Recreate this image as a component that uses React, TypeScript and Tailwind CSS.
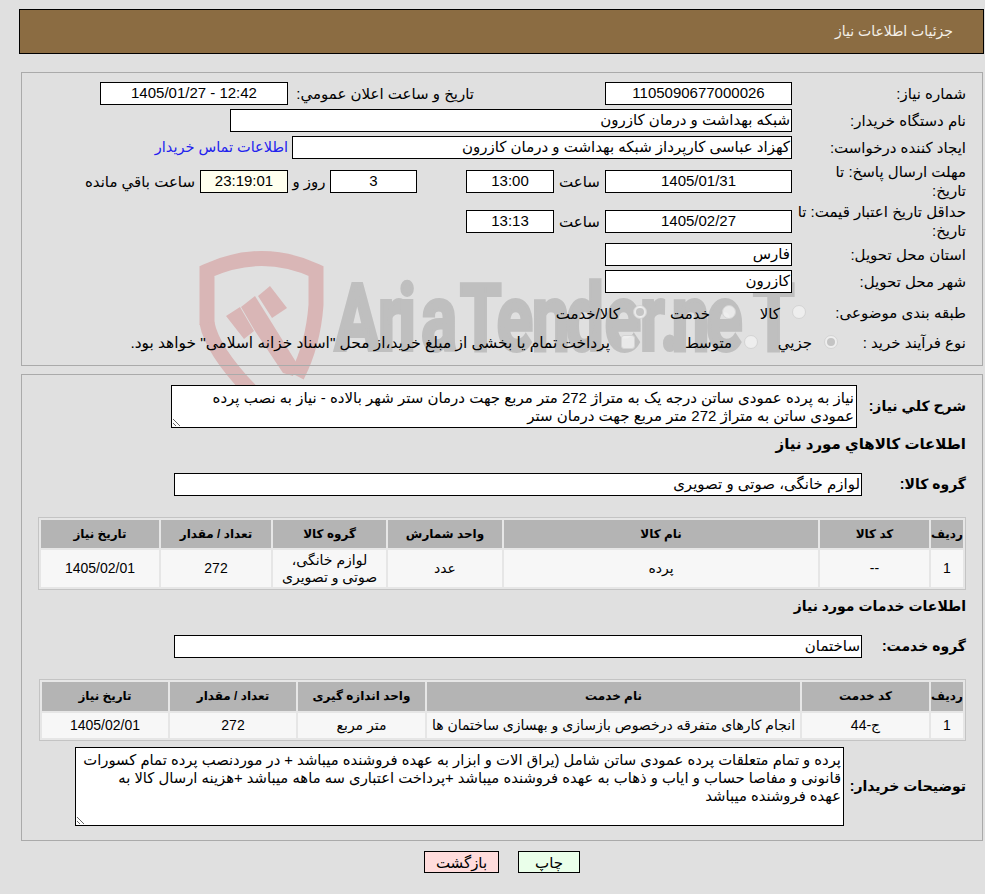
const Box = ({ w, children, center, bg }: { w: string; children?: React.ReactNode; center?: boolean; bg?: string }) => (
  <div className={`${w} ${bg ?? "bg-white"} h-[23px] shrink-0 border border-black px-px leading-[20px] whitespace-nowrap overflow-hidden ${center ? "text-center" : "text-right"}`}>
    {children}
  </div>
);

const Radio = ({ on }: { on?: boolean }) => (
  <span className="flex h-[14px] w-[14px] shrink-0 items-center justify-center rounded-full border border-[#d4d4d4] bg-[#f0f0f0]/85">
    {on && <span className="h-[8px] w-[8px] rounded-full bg-[#c4c4c4]" />}
  </span>
);

const goodsCols = ["w-[32px]", "w-[109px]", "w-[314px]", "w-[114px]", "w-[113px]", "w-[110px]", "w-[118px]"];
const serviceCols = ["w-[32px]", "w-[127px]", "w-[373px]", "w-[127px]", "w-[126px]", "w-[126px]"];

const DataTable = ({ cols, head, row, headH, rowH }: { cols: string[]; head: string[]; row: React.ReactNode[]; headH: string; rowH: string }) => (
  <table className="w-[927px] table-fixed border-separate border-spacing-[2px] border border-[#c4c4c4] bg-[#e6e6e6] text-center text-[14px]">
    <colgroup>
      {cols.map((c, i) => (
        <col key={i} className={c} />
      ))}
    </colgroup>
    <thead>
      <tr className={headH}>
        {head.map((h) => (
          <th key={h} className="whitespace-nowrap bg-[#b4b4b4] p-0 text-[12px] font-bold">{h}</th>
        ))}
      </tr>
    </thead>
    <tbody>
      <tr className={rowH}>
        {row.map((c, i) => (
          <td key={i} className="bg-[#f7f7f7] p-0 leading-[17px]">{c}</td>
        ))}
      </tr>
    </tbody>
  </table>
);

export default function App() {
  return (
    <div dir="rtl" className="relative h-[894px] overflow-hidden bg-[#e0e0e0] pt-[9px] font-['Liberation_Sans','DejaVu_Sans',sans-serif] text-[15px] leading-[19px] text-black">
      {/* watermark behind the form */}
      <svg className="absolute left-0 top-[240px] h-[160px] w-[985px] [direction:ltr]" viewBox="0 240 985 160">
        <path fill="none" stroke="#d9b6b6" strokeWidth="15" d="M207 325 L207 271 Q262 246 316 271 L316 305 Q313 345 297 376" />
        <path fill="none" stroke="#d9b6b6" strokeWidth="15" d="M207 323 Q212 350 250 390" />
        <path
          fill="#d9b6b6"
          d="M270 286 L287 308 L272 318 L258 296 Z M255 296 L270 320 L255 331 L241 307 Z M240 307 L254 331 L244 339 L226 316 Z M270 320 L296 362 L293 376 L283 373 L255 331 Z"
        />
        <text
          transform="scale(0.72 1)"
          x="465 525 553 585 639 690 739 786 840 889 917 933 981 1046"
          y="350"
          direction="ltr"
          fontFamily="Roboto, sans-serif"
          fontWeight="700"
          fontSize="93"
          fill="#bfbfbf"
          stroke="#bfbfbf"
          strokeWidth="4"
        >
          AriaTender.neT
        </text>
      </svg>

      <div className="relative">
        <div className="ml-[19px] mr-px flex h-[45px] items-center border border-black bg-[#8b6c42] pr-[30px] text-[14px] text-[#f4f0e8]">
          جزئیات اطلاعات نیاز
        </div>

        <section className="ml-[21px] mr-[2px] mt-[18px] border border-[#aaaaaa] pb-2 pr-4 pt-[9px]">
          <div className="flex h-[23px] items-center">
            <div className="w-[174px] shrink-0">شماره نیاز:</div>
            <Box w="w-[187px]" center>1105090677000026</Box>
            <div className="w-[317px] shrink-0 whitespace-nowrap pr-[131px]">تاريخ و ساعت اعلان عمومي:</div>
            <Box w="w-[188px]" center><span dir="ltr">1405/01/27 - 12:42</span></Box>
          </div>
          <div className="mt-1 flex h-[23px] items-center">
            <div className="w-[174px] shrink-0">نام دستگاه خریدار:</div>
            <Box w="w-[562px]">شبکه بهداشت و درمان کازرون</Box>
          </div>
          <div className="mt-1 flex h-[23px] items-center">
            <div className="w-[174px] shrink-0">ایجاد کننده درخواست:</div>
            <Box w="w-[500px]">کهزاد عباسی کارپرداز شبکه بهداشت و درمان کازرون</Box>
            <a className="mr-1 whitespace-nowrap text-[14.5px] text-[#2222ee]">اطلاعات تماس خریدار</a>
          </div>
          <div className="mt-[2px] flex h-[40px] items-center">
            <div className="w-[174px] shrink-0 pl-6">مهلت ارسال پاسخ: تا تاریخ:</div>
            <Box w="w-[187px]" center>1405/01/31</Box>
            <div className="w-[51px] shrink-0 text-center">ساعت</div>
            <Box w="w-[88px]" center>13:00</Box>
            <div className="w-[49px] shrink-0" />
            <Box w="w-[87px]" center>3</Box>
            <div className="w-[42px] shrink-0 text-center">روز و</div>
            <Box w="w-[88px]" center bg="bg-[#ffffee]">23:19:01</Box>
            <div className="mr-[5px] whitespace-nowrap">ساعت باقي مانده</div>
          </div>
          <div className="flex h-[40px] items-center">
            <div className="w-[174px] shrink-0">حداقل تاریخ اعتبار قیمت: تا تاریخ:</div>
            <Box w="w-[187px]" center>1405/02/27</Box>
            <div className="w-[51px] shrink-0 text-center">ساعت</div>
            <Box w="w-[88px]" center>13:13</Box>
          </div>
          <div className="mt-[2px] flex h-[23px] items-center">
            <div className="w-[174px] shrink-0">استان محل تحویل:</div>
            <Box w="w-[187px]">فارس</Box>
          </div>
          <div className="mt-1 flex h-[23px] items-center">
            <div className="w-[174px] shrink-0">شهر محل تحویل:</div>
            <Box w="w-[187px]">کازرون</Box>
          </div>
          <div className="mt-1 flex h-[30px] items-center">
            <div className="w-[160px] shrink-0 whitespace-nowrap">طبقه بندی موضوعی:</div>
            <Radio />
            <div className="mr-3 w-[44px] shrink-0 pt-[2px]">کالا</div>
            <Radio />
            <div className="mr-3 w-[63px] shrink-0 pt-[2px]">خدمت</div>
            <Radio on />
            <div className="mr-[13px] whitespace-nowrap pt-[2px]">کالا/خدمت</div>
          </div>
          <div className="flex h-[30px] items-center">
            <div className="w-[128px] shrink-0 whitespace-nowrap">نوع فرآیند خرید :</div>
            <Radio on />
            <div className="mr-3 w-[54px] shrink-0">جزيي</div>
            <Radio />
            <div className="mr-3 w-[97px] shrink-0">متوسط</div>
            <span className="h-[14px] w-[14px] shrink-0 rounded-[3px] border border-[#d4d4d4] bg-[#f0f0f0]/85" />
            <div className="mr-[11px] whitespace-nowrap text-[15.4px]">پرداخت تمام یا بخشی از مبلغ خرید،از محل "اسناد خزانه اسلامی" خواهد بود.</div>
          </div>
        </section>

        <section className="ml-[21px] mr-[2px] mt-2 border border-[#aaaaaa] pl-4 pr-4 pt-[10px] pb-[14px]">
          <div className="flex items-center">
            <div className="w-[109px] shrink-0 whitespace-nowrap text-[14px] font-bold">شرح کلي نیاز:</div>
            <textarea
              readOnly
              className="block h-[43px] w-[686px] shrink-0 border border-black bg-white px-[2px] pt-[3px] leading-[18px] outline-none"
              defaultValue="نیاز به پرده عمودی ساتن درجه یک به متراژ 272 متر مربع جهت درمان ستر شهر بالاده - نیاز به نصب پرده عمودی ساتن به متراژ 272 متر مربع جهت درمان ستر"
            />
          </div>
          <div className="flex h-[30px] items-center text-[15px] font-bold">اطلاعات کالاهاي مورد نیاز</div>
          <div className="mt-[15px] flex items-center">
            <div className="w-[104px] shrink-0 whitespace-nowrap text-[14px] font-bold">گروه کالا:</div>
            <Box w="w-[688px]">لوازم خانگی، صوتی و تصویری</Box>
          </div>
          <div className="ml-px mt-[21px]">
            <DataTable
              cols={goodsCols}
              headH="h-[28px]"
              rowH="h-[37px]"
              head={["ردیف", "کد کالا", "نام کالا", "واحد شمارش", "گروه کالا", "تعداد / مقدار", "تاریخ نیاز"]}
              row={["1", "--", "پرده", "عدد", <>لوازم خانگی،<br />صوتی و تصویری</>, "272", "1405/02/01"]}
            />
          </div>
          <div className="flex h-[32px] items-center text-[14px] font-bold">اطلاعات خدمات مورد نیاز</div>
          <div className="mt-[13px] flex items-center">
            <div className="w-[104px] shrink-0 whitespace-nowrap text-[14px] font-bold">گروه خدمت:</div>
            <Box w="w-[688px]">ساختمان</Box>
          </div>
          <div className="ml-px mt-[21px]">
            <DataTable
              cols={serviceCols}
              headH="h-[29px]"
              rowH="h-[25px]"
              head={["ردیف", "کد خدمت", "نام خدمت", "واحد اندازه گیری", "تعداد / مقدار", "تاریخ نیاز"]}
              row={["1", "ج-44", "انجام کارهای متفرقه درخصوص بازسازی و بهسازی ساختمان ها", "متر مربع", "272", "1405/02/01"]}
            />
          </div>
          <div className="mt-[6px] flex items-center">
            <div className="w-[122px] shrink-0 whitespace-nowrap text-[14px] font-bold">توضیحات خریدار:</div>
            <textarea
              readOnly
              className="block h-[79px] w-[769px] shrink-0 overflow-hidden whitespace-pre border border-black bg-white px-[2px] pt-[3px] text-[14.8px] leading-[18px] outline-none"
              defaultValue={"پرده و تمام متعلقات پرده عمودی ساتن شامل (یراق الات و ابزار به عهده فروشنده میباشد + در موردنصب پرده تمام کسورات\nقانونی و مفاصا حساب و ایاب و ذهاب به عهده فروشنده میباشد +پرداخت اعتباری سه ماهه میباشد +هزینه ارسال کالا به\nعهده فروشنده میباشد"}
            />
          </div>
        </section>

        <div className="mr-[405px] mt-[10px] flex gap-[19px]">
          <button className="h-[22px] w-[62px] border border-black bg-[#eaffea]">چاپ</button>
          <button className="h-[22px] w-[75px] border border-black bg-[#ffdcdc]">بازگشت</button>
        </div>
      </div>
    </div>
  );
}
